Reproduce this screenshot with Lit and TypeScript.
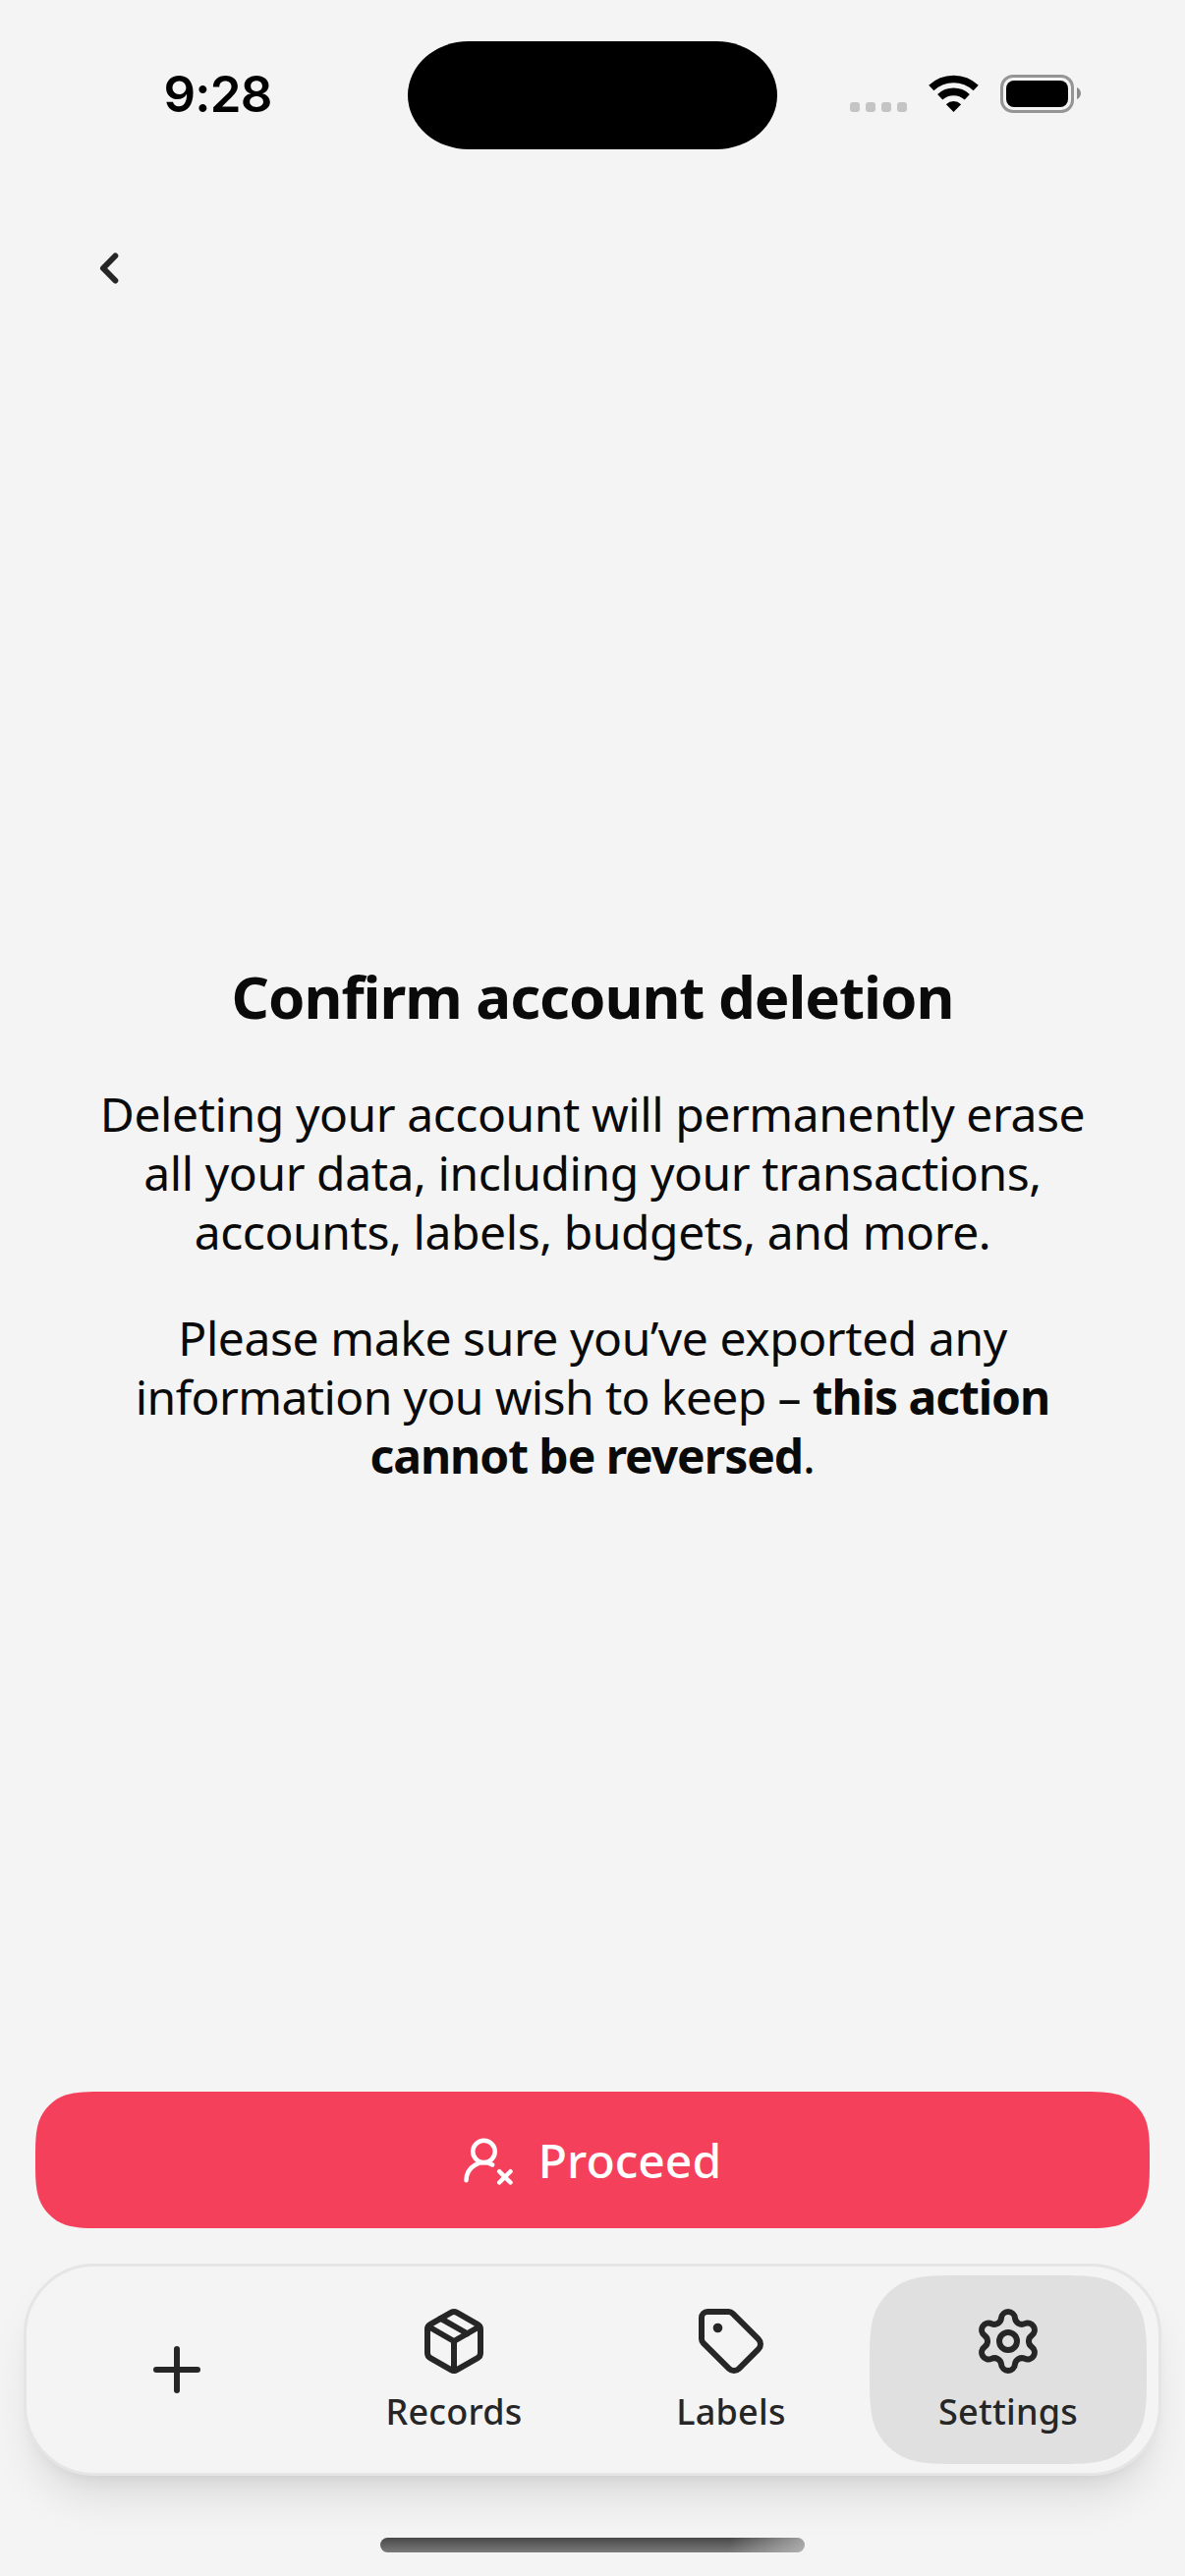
import { LitElement, html, svg, css, unsafeCSS } from "lit";

/** Outline of a rectangle with continuous (squircle) corners, for clip-path. */
function squircle(w: number, h: number, r: number) {
  const e = (n: number) => +(n * r).toFixed(2);
  const far = 1.5287, a = 1.0885, b = 0.8684, c = 0.6315, d = 0.0749, f = 0.3728, g = 0.1691;
  const ex = Math.min(e(far), w / 2), ey = Math.min(e(far), h / 2);
  return `path("M${ex} 0H${w - ex}` +
    `C${w - e(a)} 0 ${w - e(b)} 0 ${w - e(c)} ${e(d)}C${w - e(f)} ${e(g)} ${w - e(g)} ${e(f)} ${w - e(d)} ${e(c)}C${w} ${e(b)} ${w} ${e(a)} ${w} ${ey}V${h - ey}` +
    `C${w} ${h - e(a)} ${w} ${h - e(b)} ${w - e(d)} ${h - e(c)}C${w - e(g)} ${h - e(f)} ${w - e(f)} ${h - e(g)} ${w - e(c)} ${h - e(d)}C${w - e(b)} ${h} ${w - e(a)} ${h} ${w - ex} ${h}H${ex}` +
    `C${e(a)} ${h} ${e(b)} ${h} ${e(c)} ${h - e(d)}C${e(f)} ${h - e(g)} ${e(g)} ${h - e(f)} ${e(d)} ${h - e(c)}C0 ${h - e(b)} 0 ${h - e(a)} 0 ${h - ey}V${ey}` +
    `C0 ${e(a)} 0 ${e(b)} ${e(d)} ${e(c)}C${e(g)} ${e(f)} ${e(f)} ${e(g)} ${e(c)} ${e(d)}C${e(b)} 0 ${e(a)} 0 ${ex} 0Z")`;
}

const plus = svg`<path d="M5 12h14"/><path d="M12 5v14"/>`;
const box = svg`<path d="M11 21.73a2 2 0 0 0 2 0l7-4A2 2 0 0 0 21 16V8a2 2 0 0 0-1-1.73l-7-4a2 2 0 0 0-2 0l-7 4A2 2 0 0 0 3 8v8a2 2 0 0 0 1 1.73z"/><path d="M12 22V12"/><path d="M3.3 7 12 12 20.7 7"/><path d="m7.5 4.27 9 5.15"/>`;
const tag = svg`<path d="M12.586 2.586A2 2 0 0 0 11.172 2H4a2 2 0 0 0-2 2v7.172a2 2 0 0 0 .586 1.414l8.704 8.704a2.426 2.426 0 0 0 3.42 0l6.58-6.58a2.426 2.426 0 0 0 0-3.42z"/><circle cx="7.5" cy="7.5" r=".6" fill="currentColor"/>`;
const gear = svg`<path d="M9.671 4.136a2.34 2.34 0 0 1 4.659 0 2.34 2.34 0 0 0 3.319 1.915 2.34 2.34 0 0 1 2.33 4.033 2.34 2.34 0 0 0 0 3.831 2.34 2.34 0 0 1-2.33 4.033 2.34 2.34 0 0 0-3.319 1.915 2.34 2.34 0 0 1-4.659 0 2.34 2.34 0 0 0-3.32-1.915 2.34 2.34 0 0 1-2.33-4.033 2.34 2.34 0 0 0 0-3.831A2.34 2.34 0 0 1 6.35 6.051a2.34 2.34 0 0 0 3.319-1.915"/><circle cx="12" cy="12" r="3"/>`;
const userX = svg`<path d="M2 21a8 8 0 0 1 11.873-7"/><circle cx="10" cy="8" r="5"/><path d="m17 17 5 5"/><path d="m22 17-5 5"/>`;

const icon = (shape: unknown) =>
  html`<svg class="icon" viewBox="0 0 24 24" aria-hidden="true">${shape}</svg>`;

class AppRoot extends LitElement {
  static styles = css`
    :host {
      display: flex; flex-direction: column; box-sizing: border-box;
      width: 1206px; height: 2622px; overflow: hidden;
      background: #f4f4f4; color: #0a0a0a;
      font-family: "Noto Sans", "Open Sans", sans-serif;
    }
    .icon { fill: none; stroke: currentColor; stroke-width: 2; stroke-linecap: round; stroke-linejoin: round; display: block; }
    .status { display: grid; grid-template-columns: 415px 376px 415px; height: 192px; padding-top: 42px; box-sizing: border-box; align-items: start; color: #000; }
    .time { font: 580 51px/60px Inter, sans-serif; padding: 24px 0 0 166.5px; letter-spacing: -0.8px; }
    .island { height: 110px; border-radius: 62px / 55px; background: #000; }
    .indicators { display: block; width: 415px; height: 111px; }
    .top { padding: 45px 0 0 75px; }
    .back { display: block; width: 72px; height: 72px; padding: 0; border: 0; background: none; color: #262626; }
    .back svg { width: 72px; height: 72px; }
    .content { flex: 1; text-align: center; padding-top: 665px; }
    h1 { margin: 0; font-size: 60px; line-height: 80px; font-weight: 700; letter-spacing: -1.05px; }
    p { margin: 0; font-size: 48px; line-height: 60px; font-weight: 400; }
    h1 + p { margin-top: 50px; }
    p + p { margin-top: 48px; }
    .line { display: block; white-space: nowrap; letter-spacing: -0.43px; }
    .tight { letter-spacing: -0.62px; }
    b { font-weight: 700; letter-spacing: -1.05px; }
    .proceed {
      display: flex; align-items: center; justify-content: center; gap: 24px;
      width: 1134px; height: 139px; margin: 0 36px 36px; padding: 0 2px 0 0; border: 0; box-sizing: border-box;
      background: #f5405c; color: #fff; font: 500 48px/60px "Noto Sans", sans-serif;
      clip-path: ${unsafeCSS(squircle(1134, 139, 48))};
    }
    .proceed .icon { width: 54px; height: 54px; }
    .nav {
      display: grid; grid-template-columns: repeat(4, 282px); box-sizing: border-box;
      width: 1158px; height: 216px; margin: 0 24px; padding: 9px 12px;
      border: 3px solid #e5e5e5; border-radius: 72px; background: #f4f4f4;
      box-shadow: 0 30px 45px -9px rgba(0,0,0,.1), 0 12px 18px -12px rgba(0,0,0,.1);
    }
    .tab { display: flex; flex-direction: column; align-items: center; justify-content: center; gap: 12px; color: #262626; font-size: 36px; line-height: 48px; font-weight: 500; letter-spacing: 0.25px; }
    .tab .icon { width: 72px; height: 72px; }
    .labelled { padding-top: 2px; }
    .active { background: #e0e0e0; clip-path: ${unsafeCSS(squircle(282, 192, 63))}; }
    .home { width: 432px; height: 15px; margin: 63px auto 24px; border-radius: 7.5px;
      background: linear-gradient(100deg, rgba(200,200,200,0) 82%, rgba(200,200,200,.7) 100%), linear-gradient(#484848, #7a7a7a); }
  `;

  render() {
    return html`
      <div class="status">
        <div class="time">9:28</div>
        <div class="island"></div>
        <svg class="indicators" viewBox="791 42 415 111" aria-hidden="true">
          <g fill="#c4c4c4">
            ${[865, 881, 897, 913].map((x) => svg`<rect x=${x} y="104" width="10" height="10" rx="3"/>`)}
          </g>
          <g fill="none" stroke="#000">
            <path d="M947.8 89.500a33 33 0 0 1 45.4 0" stroke-width="7.6"/>
            <path d="M956.7 98.8a20.3 20.3 0 0 1 27.6 0" stroke-width="7.6"/>
          </g>
          <path d="M970.5 114l-7.6-7.8a10.9 10.9 0 0 1 15.2 0z"/>
          <rect x="1019.5" y="77.5" width="72" height="36" rx="11.5" fill="none" stroke="#959595" stroke-width="3"/>
          <rect x="1024" y="82" width="63" height="27" rx="8"/>
          <path d="M1096 89c5.3 2.3 5.3 9.7 0 12z" fill="#8b8b8b"/>
        </svg>
      </div>
      <div class="top">
        <button class="back" aria-label="Back">
          <svg class="icon" viewBox="0 0 72 72"><path d="M42.3 23.5 30 36 42.3 48.5" stroke-width="6"/></svg>
        </button>
      </div>
      <main class="content">
        <h1>Confirm account deletion</h1>
        <p>
          <span class="line">Deleting your account will permanently erase</span>
          <span class="line">all your data, including your transactions,</span>
          <span class="line">accounts, labels, budgets, and more.</span>
        </p>
        <p>
          <span class="line">Please make sure you’ve exported any</span>
          <span class="line tight">information you wish to keep – <b>this action</b></span>
          <span class="line"><b>cannot be reversed</b>.</span>
        </p>
      </main>
      <button class="proceed">${icon(userX)}<span>Proceed</span></button>
      <nav class="nav">
        <div class="tab">${icon(plus)}</div>
        <div class="tab labelled">${icon(box)}<span>Records</span></div>
        <div class="tab labelled">${icon(tag)}<span>Labels</span></div>
        <div class="tab labelled active">${icon(gear)}<span>Settings</span></div>
      </nav>
      <div class="home"></div>
    `;
  }
}
customElements.define("app-root", AppRoot);
